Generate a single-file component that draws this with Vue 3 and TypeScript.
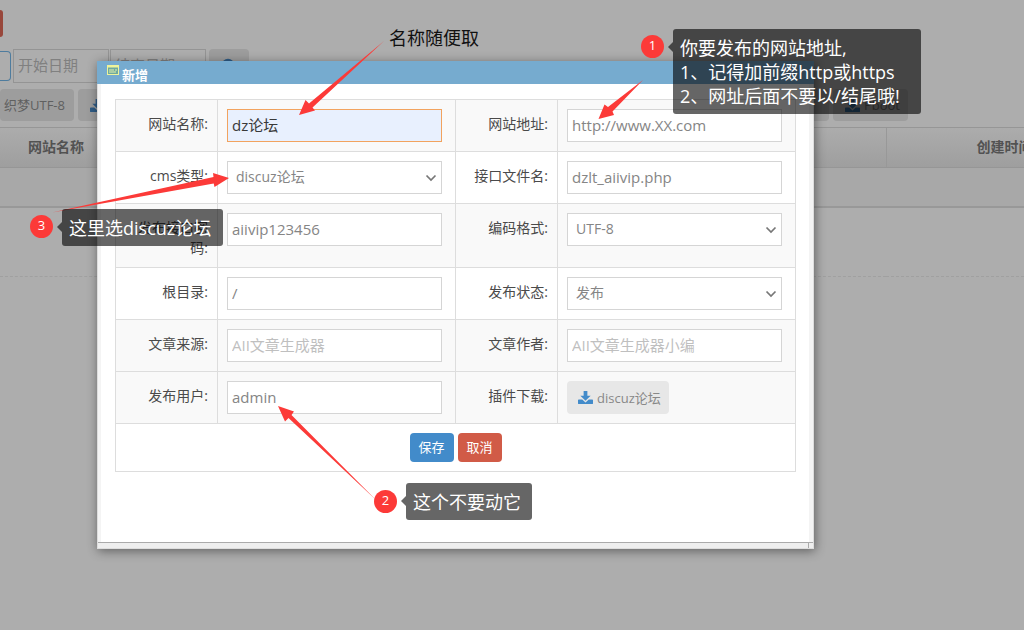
<script setup lang="ts">
import { ref } from 'vue'

const siteName = ref('dz论坛')
const siteUrl = ref('http://www.XX.com')
const cmsType = ref('discuz论坛')
const apiFile = ref('dzlt_aiivip.php')
const secret = ref('aiivip123456')
const encoding = ref('UTF-8')
const rootDir = ref('/')
const status = ref('发布')
const source = ref('')
const author = ref('')
const user = ref('admin')
</script>

<template>
  <div class="page">
    <div class="backdrop">
      <div class="top"><span class="red-btn"></span></div>
      <div class="filters">
        <span class="keyword"></span>
        <input class="date" type="text" placeholder="开始日期" aria-label="开始日期" />
        <input class="date" type="text" placeholder="结束日期" aria-label="结束日期" />
        <button class="grey search" type="button" aria-label="搜索">
          <svg width="16" height="16" viewBox="0 0 16 16" fill="none" stroke="#2f5c86" stroke-width="2.4"><circle cx="7" cy="7" r="5" /><path d="M11 11l4 4" /></svg>
        </button>
      </div>
      <div class="downloads">
        <div class="group">
          <button class="grey first" type="button">织梦UTF-8</button>
          <button class="grey" type="button" aria-label="下载">
            <svg class="dl" viewBox="0 0 16 16" fill="#2f5c86"><path d="M6 1h4v5h3.500L8 11.500 2.500 6H6z" /><path d="M.8 10h3.700L8 13.300 11.500 10h3.700q.8 0 .8.800v3.200q0 1-.8 1H.8q-.8 0-.8-1v-3.200q0-.8.8-.8z" /></svg>
          </button>
        </div>
        <div class="group">
          <button class="grey plain" type="button" aria-label="下载"></button>
          <button class="grey pboot" type="button">
            <svg class="dl" viewBox="0 0 16 16" fill="#2f5c86"><path d="M6 1h4v5h3.500L8 11.500 2.500 6H6z" /><path d="M.8 10h3.700L8 13.300 11.500 10h3.700q.8 0 .8.800v3.200q0 1-.8 1H.8q-.8 0-.8-1v-3.200q0-.8.8-.8z" /></svg>
            Pboot
          </button>
        </div>
      </div>
      <table class="list">
        <thead>
          <tr><th class="c1">网站名称</th><th></th><th class="c3">创建时间</th></tr>
        </thead>
        <tbody>
          <tr class="filler"><td colspan="3"></td></tr>
          <tr class="row"><td colspan="3"></td></tr>
        </tbody>
      </table>
    </div>

    <section class="dialog" role="dialog" aria-labelledby="dlg-title">
      <header class="bar">
        <svg class="win" width="12" height="10" viewBox="0 0 12 10"><rect x="0.500" y="0.500" width="11" height="9" fill="#6ea9a0" stroke="#eef39a" /><path d="M0 1.500h12" stroke="#eef39a" stroke-width="2" /><path d="M2 5h5M8 5h2M2 7h7" stroke="#e8f3a8" /></svg>
        <h1 id="dlg-title">新增</h1>
      </header>
      <form class="body" @submit.prevent>
        <table class="form">
          <tbody>
            <tr class="alt">
              <th><label for="siteName">网站名称:</label></th>
              <td><input id="siteName" v-model="siteName" class="field active" type="text" /></td>
              <th><label for="siteUrl">网站地址:</label></th>
              <td><input id="siteUrl" v-model="siteUrl" class="field" type="text" /></td>
            </tr>
            <tr>
              <th><label for="cms">cms类型:</label></th>
              <td><select id="cms" v-model="cmsType" class="field"><option>discuz论坛</option></select></td>
              <th><label for="api">接口文件名:</label></th>
              <td><input id="api" v-model="apiFile" class="field" type="text" /></td>
            </tr>
            <tr class="alt">
              <th><label for="secret">发布接口密码:</label></th>
              <td><input id="secret" v-model="secret" class="field" type="text" /></td>
              <th><label for="enc">编码格式:</label></th>
              <td><select id="enc" v-model="encoding" class="field"><option>UTF-8</option></select></td>
            </tr>
            <tr>
              <th><label for="root">根目录:</label></th>
              <td><input id="root" v-model="rootDir" class="field" type="text" /></td>
              <th><label for="status">发布状态:</label></th>
              <td><select id="status" v-model="status" class="field"><option>发布</option></select></td>
            </tr>
            <tr class="alt">
              <th><label for="source">文章来源:</label></th>
              <td><input id="source" v-model="source" class="field" type="text" placeholder="AII文章生成器" /></td>
              <th><label for="author">文章作者:</label></th>
              <td><input id="author" v-model="author" class="field" type="text" placeholder="AII文章生成器小编" /></td>
            </tr>
            <tr class="alt">
              <th><label for="user">发布用户:</label></th>
              <td><input id="user" v-model="user" class="field" type="text" /></td>
              <th><label for="plugin">插件下载:</label></th>
              <td>
                <button id="plugin" class="plugin" type="button">
                  <svg class="dl" viewBox="0 0 16 16" fill="#428bca"><path d="M6 1h4v5h3.500L8 11.500 2.500 6H6z" /><path d="M.8 10h3.700L8 13.300 11.500 10h3.700q.8 0 .8.800v3.200q0 1-.8 1H.8q-.8 0-.8-1v-3.200q0-.8.8-.8z" /></svg>
                  discuz论坛
                </button>
              </td>
            </tr>
            <tr>
              <td colspan="4" class="actions">
                <div class="btns">
                  <button class="btn save" type="submit">保存</button>
                  <button class="btn cancel" type="button">取消</button>
                </div>
              </td>
            </tr>
          </tbody>
        </table>
      </form>
      <footer class="foot"><span class="grip"></span></footer>
    </section>

    <svg class="arrows" width="1024" height="630" viewBox="0 0 1024 630" fill="#fc3a38" aria-hidden="true">
      <path d="M384 41L312.500 107.500 315 110.500 299 115 305.500 100 309 103.500z" />
      <path d="M643 80L612.500 111.500 614 115 598.500 119 604.500 104.500 608 107z" />
      <path d="M52 212.500L213.500 177 213 173 229 178 214.500 187 213.700 183.500z" />
      <path d="M376 500L288.500 418 285 421.500 278 406 294 411.500 291.500 415z" />
    </svg>
    <p class="note free">名称随便取</p>
    <span class="num n1">1</span>
    <p class="note tip t1">你要发布的网站地址,<br />1、记得加前缀http或https<br />2、网址后面不要以/结尾哦!</p>
    <span class="num n2">2</span>
    <p class="note tip t2">这个不要动它</p>
    <span class="num n3">3</span>
    <p class="note tip t3">这里选discuz论坛</p>
  </div>
</template>

<style>
body { margin: 0; background: #adadad; }
</style>

<style scoped>
* { box-sizing: border-box; }
.page {
  position: relative;
  min-height: 100vh;
  overflow: hidden;
  background: #adadad;
  font-family: "Open Sans", "Noto Sans CJK SC", sans-serif;
  font-size: 14px;
  line-height: 20px;
  color: #4a4a4a;
}
button, input, select { font-family: inherit; margin: 0; }
.top { height: 49px; padding-top: 10px; }
.red-btn { display: block; width: 3px; height: 27px; background: #98473b; border-radius: 0 4px 4px 0; }
.filters { display: flex; align-items: center; height: 34px; }
.keyword { width: 11px; height: 30px; margin-right: 2px; border: 1px solid #4e7c9e; border-left: 0; border-radius: 0 4px 4px 0; }
.date { width: 96px; height: 34px; margin-right: 1px; padding: 0 4px 2px; border: 1px solid #949494; background: #adadad; font-size: 15px; }
.date::placeholder { color: #808080; opacity: 1; }
.grey { display: flex; align-items: center; gap: 4px; height: 32px; padding: 0 12px; border: 0; border-radius: 4px; background: #9d9d9d; color: #606060; font-size: 13px; }
.search { height: 34px; margin-left: 2px; }
.dl { width: 15px; height: 15px; flex: none; }
.downloads { display: flex; justify-content: space-between; padding: 6px 116px 6px 0; }
.group { display: flex; gap: 4px; }
.first { padding: 0 9px 2px 4px; }
.plain { width: 39px; }
.pboot { padding: 0 8px 0 12px; }
.list { width: 100%; border-collapse: collapse; table-layout: fixed; }
.list thead tr { height: 40px; background: linear-gradient(#acacac, #9e9e9e); }
.list th { padding: 0 0 2px; border-top: 1px solid #969696; border-bottom: 1px solid #969696; font-size: 14px; font-weight: 700; color: #525252; }
.list .c1 { width: 112px; }
.list .c3 { width: 138px; border-left: 1px solid #989898; padding-left: 90px; white-space: nowrap; text-align: left; }
.list td { padding: 0; }
.filler { height: 39px; background: #a8a8a8; border-bottom: 2px solid #989898; }
.row { height: 70px; border-bottom: 1px dashed #a0a0a0; }

.dialog {
  position: absolute;
  top: 61px;
  left: 97px;
  right: 210px;
  background: linear-gradient(90deg, #f4f4f4 3px, #fff 3px, #fff calc(100% - 4px), #f4f4f4 calc(100% - 4px));
  border: 1px solid #ddd;
  border-top: 0;
  box-shadow: 1px 2px 10px rgba(0, 0, 0, 0.45);
}
.bar { display: flex; gap: 3px; height: 23px; margin: 0 -1px; padding: 4px 10px 0; background: #76abcf; }
.bar h1 { margin: 0; font-size: 13px; line-height: 20px; font-weight: 700; color: #fff; }
.win { flex: none; }
.body { padding: 15px 17px 70px; }
.form { width: 100%; border-collapse: collapse; table-layout: fixed; background: #fff; }
.form th, .form td { border: 1px solid #ddd; padding: 9px; vertical-align: top; }
.form th { width: 102px; text-align: right; font-weight: 400; padding: 14px 9px 9px; }
.form td { padding: 9px 13px 9px 9px; }
.alt { background: #f9f9f9; }
.field { display: block; width: 100%; height: 33px; padding: 0 4px 2px; border: 1px solid #d5d5d5; border-radius: 0; background: #fff; color: #858585; font-size: 15px; }
.field::placeholder { color: #bfbfbf; opacity: 1; }
.active { border-color: #f2a35e; background: #e8f0fe; color: #393939; }
select.field {
  appearance: none;
  padding: 0 8px 2px;
  font-size: 14px;
  background: #fff url("data:image/svg+xml,%3Csvg xmlns='http://www.w3.org/2000/svg' width='12' height='8' fill='none' stroke='%23777' stroke-width='1.700'%3E%3Cpath d='M1.500 1.500L6 6l4.500-4.500'/%3E%3C/svg%3E") no-repeat right 4px center;
}
.plugin { display: flex; align-items: center; gap: 4px; height: 33px; padding: 0 8px 0 11px; border: 0; border-radius: 4px; background: #e7e7e7; color: #888; font-size: 13px; }
.form .actions { padding: 9px; }
.btns { display: flex; justify-content: center; gap: 4px; }
.btn { width: 44px; height: 29px; padding: 0 0 2px; border: 0; border-radius: 4px; color: #fff; font-size: 13px; }
.save { background: #428bca; }
.cancel { background: #d15b47; }
.foot { display: flex; justify-content: flex-end; height: 6px; border-top: 1px solid #aaa; background: #eee; }
.grip { width: 5px; border-left: 1px solid #aaa; }

.arrows { position: absolute; top: 0; left: 0; }
.note { position: absolute; margin: 0; font-size: 18px; line-height: 24px; white-space: nowrap; }
.free { left: 389px; top: 26px; color: #111; }
.tip { padding: 7px 7px 6px; border-radius: 3px; background: rgba(0, 0, 0, 0.6); color: #fff; }
.tip::before { content: ""; position: absolute; left: -5px; top: 13px; border: 5px solid transparent; border-left: 0; border-right-color: rgba(0, 0, 0, 0.6); }
.t1 { left: 673px; top: 29px; width: 248px; }
.t2 { left: 406px; top: 483px; width: 126px; }
.t3 { left: 62px; top: 209px; width: 161px; }
.num { position: absolute; width: 23px; height: 23px; border-radius: 50%; background: #fc3a38; color: #fff; font-size: 13px; line-height: 21px; text-align: center; }
.n1 { left: 641px; top: 35px; }
.n2 { left: 374px; top: 490px; }
.n3 { left: 30px; top: 215px; }
</style>
